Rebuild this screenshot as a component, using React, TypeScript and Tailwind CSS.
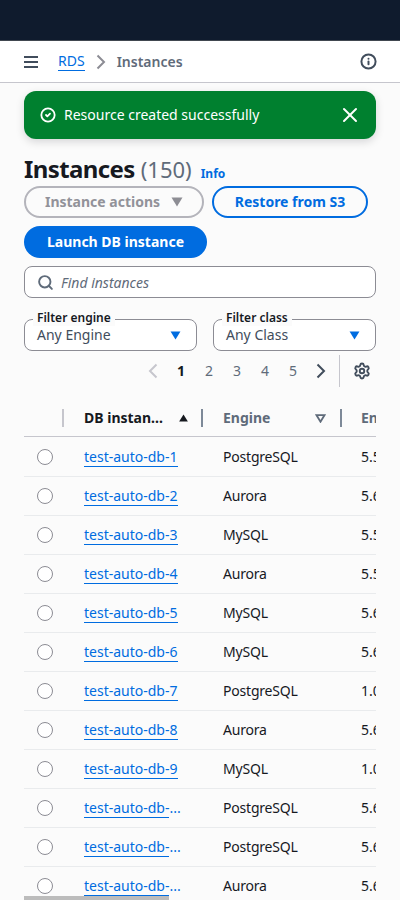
import React from 'react';
import { Info, Search, Settings, X, CircleCheck } from 'lucide-react';

const rows = [
  ['test-auto-db-1', 'PostgreSQL', '5.5'],
  ['test-auto-db-2', 'Aurora', '5.6'],
  ['test-auto-db-3', 'MySQL', '5.5'],
  ['test-auto-db-4', 'Aurora', '5.5'],
  ['test-auto-db-5', 'MySQL', '5.6'],
  ['test-auto-db-6', 'MySQL', '5.6'],
  ['test-auto-db-7', 'PostgreSQL', '1.0'],
  ['test-auto-db-8', 'Aurora', '5.6'],
  ['test-auto-db-9', 'MySQL', '1.0'],
  ['test-auto-db-...', 'PostgreSQL', '5.6'],
  ['test-auto-db-...', 'PostgreSQL', '5.6'],
  ['test-auto-db-...', 'Aurora', '5.6'],
];

const Caret = ({ className }: { className: string }) => (
  <svg viewBox="0 0 12 10" className={className}>
    <path d="M0.5 0.5h11L6 9.5z" fill="currentColor" />
  </svg>
);

const Chevron = ({ className, left }: { className: string; left?: boolean }) => (
  <svg viewBox="0 0 10 16" fill="none" stroke="currentColor" strokeWidth="2" className={className}>
    <path d={left ? 'M8.5 1.5L2 8l6.5 6.5' : 'M1.5 1.5L8 8l-6.5 6.5'} />
  </svg>
);

const Filter = ({ label, value, className }: { label: string; value: string; className: string }) => (
  <div className={`relative h-8 rounded-lg border border-[#8c8c94] bg-white flex items-center justify-between pl-3 pr-[15px] ${className}`}>
    <span className="absolute left-2 -top-[10px] bg-[#fbfbfb] px-1 text-xs leading-4 font-semibold">{label}</span>
    <span className="text-sm text-[#414d5c]">{value}</span>
    <Caret className="w-[11px] h-[9px] text-[#006ce0]" />
  </div>
);

const App = () => {
  return (
    <div className="relative h-[900px] w-[400px] overflow-hidden bg-[#fbfbfb] font-['Noto_Sans',sans-serif] text-[#16191f]">
      {/* top bar */}
      <div className="h-[41px] bg-[#0f1b2d] border-b border-[#414750]"></div>

      {/* breadcrumbs */}
      <div className="h-[42px] bg-white border-b border-[#c6c6cd] flex items-center pl-6 pr-[23px]">
        <svg viewBox="0 0 14 12" className="w-[14px] h-3 text-[#414d5c]" stroke="currentColor" strokeWidth="2">
          <path d="M0 1h14M0 6h14M0 11h14" />
        </svg>
        <a className="ml-5 text-sm leading-[18px] text-[#006ce0] border-b border-[#006ce0]">RDS</a>
        <Chevron className="ml-[11px] w-[10px] h-4 text-[#8c8c94]" />
        <span className="ml-[11px] text-sm font-semibold text-[#5f6b7a]">Instances</span>
        <Info size={17} strokeWidth={2.8} className="ml-auto text-[#414d5c]" />
      </div>

      <div className="px-6">
        {/* flash */}
        <div className="mt-2 h-12 rounded-xl bg-[#00802f] text-white flex items-center pl-4 pr-[14px] shadow-[0_3px_8px_rgba(0,7,22,0.15)]">
          <CircleCheck size={16} strokeWidth={2.7} />
          <span className="ml-2 text-sm">Resource created successfully</span>
          <X size={24} strokeWidth={2} className="ml-auto" />
        </div>

        {/* heading */}
        <div className="mt-[13px] h-[34px] flex items-baseline">
          <h1 className="text-2xl leading-[34px] font-bold tracking-[-0.6px]">Instances</h1>
          <span className="ml-[6px] text-[22px] text-[#5f6b7a]">(150)</span>
          <a className="ml-[9px] text-xs font-bold text-[#006ce0]">Info</a>
        </div>

        {/* actions */}
        <div className="flex gap-2">
          <button className="h-8 w-[180px] rounded-full border-2 border-[#b4b4bb] flex items-center justify-center gap-[11px] text-sm font-bold text-[#929299]">
            Instance actions
            <Caret className="w-3 h-[10px] text-[#8d8d94]" />
          </button>
          <button className="h-8 w-[156px] rounded-full border-2 border-[#006ce0] text-sm font-bold text-[#006ce0]">
            Restore from S3
          </button>
        </div>
        <button className="mt-2 block h-8 w-[183px] rounded-full bg-[#006ce0] text-sm font-bold text-white">
          Launch DB instance
        </button>

        {/* search */}
        <div className="mt-2 h-8 rounded-lg border border-[#8c8c94] bg-white flex items-center pl-3">
          <Search size={17} strokeWidth={2.7} className="text-[#5f6b7a]" />
          <span className="ml-[7px] mt-[1px] text-sm italic text-[#5f6b7a]">Find instances</span>
        </div>

        {/* filters */}
        <div className="mt-[21px] flex gap-4">
          <Filter label="Filter engine" value="Any Engine" className="w-[173px]" />
          <Filter label="Filter class" value="Any Class" className="w-[163px]" />
        </div>

        {/* pagination */}
        <div className="mt-1 h-8 flex items-center justify-end text-sm text-[#5f6b7a]">
          <Chevron left className="mr-[9px] w-[10px] h-4 text-[#c6c6cd]" />
          <span className="w-7 text-center font-bold text-[#16191f]">1</span>
          <span className="w-7 text-center">2</span>
          <span className="w-7 text-center">3</span>
          <span className="w-7 text-center">4</span>
          <span className="w-7 text-center">5</span>
          <Chevron className="ml-[9px] w-[10px] h-4 text-[#414d5c]" />
          <div className="ml-[13px] h-8 border-l border-[#c6c6cd]"></div>
          <Settings size={18} strokeWidth={2.5} className="ml-[13px] mr-[5px] text-[#414d5c]" />
        </div>

        {/* table */}
        <div className="mt-[13px] overflow-hidden">
          <div className="h-[37px] flex items-center border-b border-[#c6c6cd] text-sm font-bold">
            <div className="w-[40px] shrink-0 flex justify-end">
              <div className="h-[18px] w-[2px] bg-[#c6c6cd]"></div>
            </div>
            <div className="w-[137px] shrink-0 flex items-center pl-[20px] text-[#16191f]">
              <span>DB instan...</span>
              <Caret className="ml-[15px] w-[11px] h-[8px] rotate-180 text-[#16191f]" />
            </div>
            <div className="h-[18px] w-[2px] shrink-0 bg-[#7d8998]"></div>
            <div className="w-[137px] shrink-0 flex items-center pl-[20px] pr-[14px] text-[#5f6b7a]">
              <span>Engine</span>
              <svg viewBox="0 0 12 10" className="ml-auto w-[11px] h-[9px] text-[#5f6b7a]">
                <path d="M1.5 1.2h9L6 8.6z" fill="none" stroke="currentColor" strokeWidth="2" />
              </svg>
            </div>
            <div className="h-[18px] w-[2px] shrink-0 bg-[#7d8998]"></div>
            <span className="pl-[19px] text-[#5f6b7a]">En</span>
          </div>

          <div className="mt-px">
            {rows.map((row, i) => (
              <div key={i} className="h-[39px] flex items-center border-b border-[#e9ebed] text-sm text-[#16191f]">
                <div className="w-[39px] shrink-0 pl-[13px]">
                  <div className="h-4 w-4 rounded-full border border-[#8c8c94] bg-white"></div>
                </div>
                <div className="w-[141px] shrink-0 pl-[21px]">
                  <a
                    className={
                      row[0].endsWith('...')
                        ? 'block w-[85px] whitespace-nowrap leading-[18px] text-[#006ce0] border-b border-[#006ce0]'
                        : 'block w-fit whitespace-nowrap leading-[18px] text-[#006ce0] border-b border-[#006ce0]'
                    }
                  >
                    {row[0]}
                  </a>
                </div>
                <div className="w-[138px] shrink-0 pl-[19px] tracking-[-0.2px]">{row[1]}</div>
                <div className="pl-[19px] whitespace-nowrap">{row[2]}</div>
              </div>
            ))}
          </div>
        </div>
      </div>

      {/* scrollbar thumb over the table */}
      <div className="absolute left-6 bottom-0 h-1 w-[145px] bg-[#bcbcbc]"></div>
    </div>
  );
};

export default App;
